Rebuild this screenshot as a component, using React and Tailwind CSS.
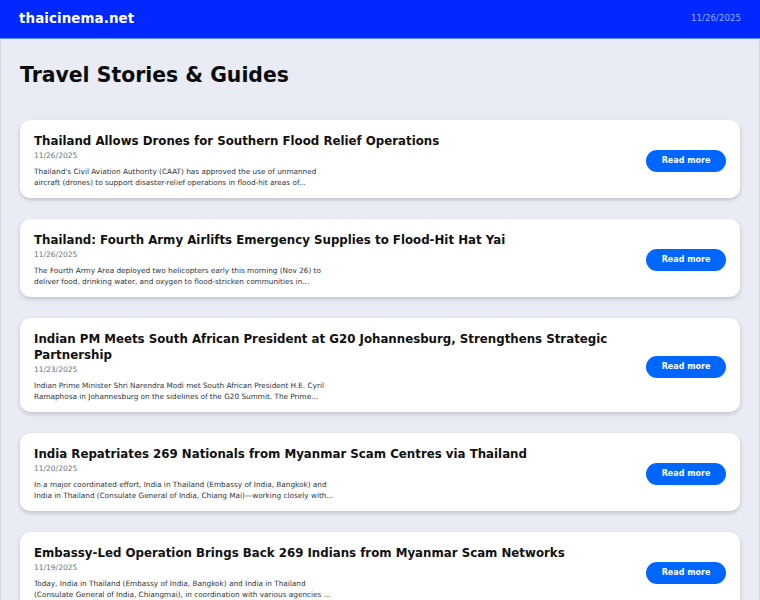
import React from "react";

const posts = [
  {
    title: "Thailand Allows Drones for Southern Flood Relief Operations",
    date: "11/26/2025",
    desc: "Thailand's Civil Aviation Authority (CAAT) has approved the use of unmanned aircraft (drones) to support disaster-relief operations in flood-hit areas of...",
  },
  {
    title: "Thailand: Fourth Army Airlifts Emergency Supplies to Flood-Hit Hat Yai",
    date: "11/26/2025",
    desc: "The Fourth Army Area deployed two helicopters early this morning (Nov 26) to deliver food, drinking water, and oxygen to flood-stricken communities in...",
  },
  {
    title: "Indian PM Meets South African President at G20 Johannesburg, Strengthens Strategic Partnership",
    date: "11/23/2025",
    desc: "Indian Prime Minister Shri Narendra Modi met South African President H.E. Cyril Ramaphosa in Johannesburg on the sidelines of the G20 Summit. The Prime...",
  },
  {
    title: "India Repatriates 269 Nationals from Myanmar Scam Centres via Thailand",
    date: "11/20/2025",
    desc: "In a major coordinated effort, India in Thailand (Embassy of India, Bangkok) and India in Thailand (Consulate General of India, Chiang Mai)\u2014working closely with...",
  },
  {
    title: "Embassy-Led Operation Brings Back 269 Indians from Myanmar Scam Networks",
    date: "11/19/2025",
    desc: "Today, India in Thailand (Embassy of India, Bangkok) and India in Thailand (Consulate General of India, Chiangmai), in coordination with various agencies ...",
  },
];

export default function App() {
  return (
    <div
      className="min-h-[600px] bg-[#e9ecf5]"
      style={{ fontFamily: '"DejaVu Sans", Verdana, sans-serif' }}
    >
      <header className="h-[39px] bg-[#0028ff] border-b border-[#5a8cff] flex items-center justify-between pl-[19px] pr-[19px]">
        <div className="text-white font-bold text-[13.4px] tracking-[0.1px]">thaicinema.net</div>
        <div className="text-[#8fb0ff] text-[8.7px]">11/26/2025</div>
      </header>
      <main className="border-x border-[#d4d7de] px-[19px] pt-[20px] pb-8">
        <h1 className="text-[20.4px] font-bold text-[#0b0b0b] leading-[32px] mb-[29px]">
          Travel Stories &amp; Guides
        </h1>
        <div className="flex flex-col gap-[21px]">
          {posts.map((p, i) => (
            <div
              key={i}
              className="bg-white rounded-[10px] shadow-[0_2px_4px_rgba(0,0,0,0.18)] flex items-center justify-between pl-[14px] pr-[14px] pt-[13px] pb-[10px]"
            >
              <div className="flex flex-col">
                <div className="text-[11.8px] font-bold text-[#111] leading-[16px] max-w-[590px]">
                  {p.title}
                </div>
                <div className="text-[7.5px] text-[#6b7280] leading-[11px] mt-[1px]">{p.date}</div>
                <div className="text-[7.3px] text-[#2d3440] leading-[11px] mt-[5px] max-w-[302px]">
                  {p.desc}
                </div>
              </div>
              <button className="shrink-0 w-[80px] h-[22px] rounded-full bg-[#0066ff] text-white font-bold text-[8px] flex items-center justify-center">
                Read more
              </button>
            </div>
          ))}
        </div>
      </main>
    </div>
  );
}
